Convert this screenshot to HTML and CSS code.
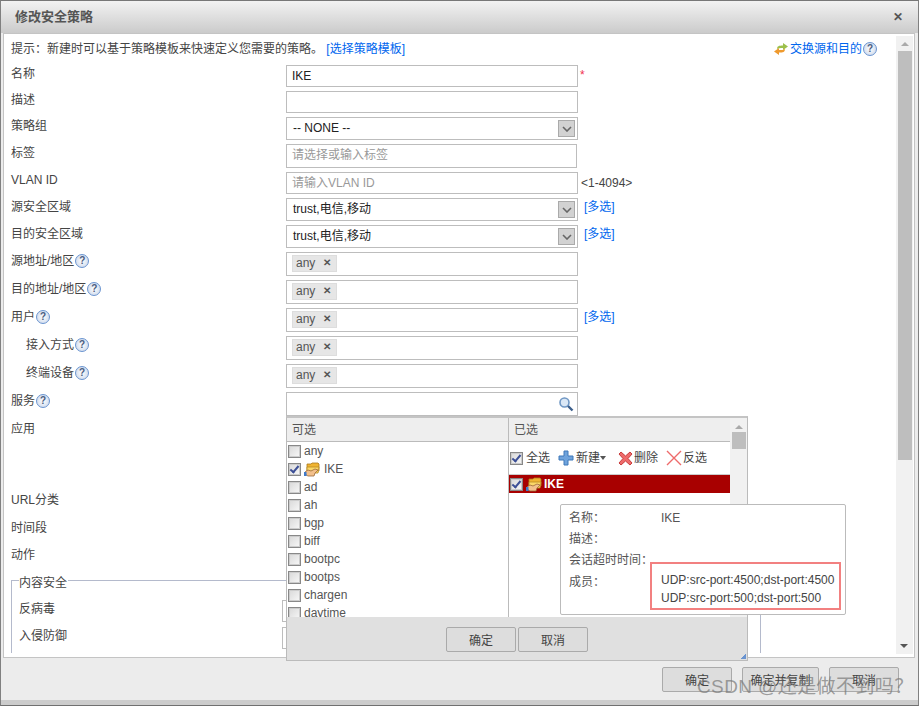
FILE: index.html
```html
<!DOCTYPE html>
<html>
<head>
    <title>修改安全策略</title>
    <link rel="stylesheet" href="styles.css">
</head>
<body>
    <svg class="defs" width="0" height="0">
        <symbol id="folder" viewBox="0 0 16 16">
            <path d="M3 3h4l1-1h6l1 1v7H3z" fill="#f0b432" stroke="#a9781c" stroke-width=".8"/>
            <path d="M3 6h12l-1 6H3z" fill="#fbd768" stroke="#b98a22" stroke-width=".8"/>
            <path d="M1 11l3-2 3 1 4-2 3 1-3 3-1 3H4l-2-1z" fill="#f3c08c" stroke="#9a6a3a" stroke-width=".8"/>
            <rect x="0" y="11" width="2.5" height="4" fill="#3f79c9"/>
        </symbol>
    </svg>

    <div class="dialog">
        <div class="title-bar">
            <span class="title">修改安全策略</span>
            <span class="close">&#10005;</span>
        </div>

        <div class="main">
            <div class="form">
                <div class="hint-row">
                    <span>提示：新建时可以基于策略模板来快速定义您需要的策略。 <a class="link">[选择策略模板]</a></span>
                    <span class="swap">
                        <svg width="14" height="12" viewBox="0 0 14 12">
                            <path d="M3 6C3 3 5 2.500 9 2.500V0l5 3.500L9 7V5C6 5 4.500 5 3 6z" fill="#9cc04c"/>
                            <path d="M11 6c0 3-2 3.500-6 3.500V12L0 8.500 5 5v2c3 0 4.500 0 6-1z" fill="#ef9a2e"/>
                        </svg>
                        <a class="link">交换源和目的</a><i class="help">?</i>
                    </span>
                </div>

                <div class="row">
                    <label>名称</label>
                    <div class="field h22">IKE</div>
                    <span class="req">*</span>
                </div>
                <div class="row">
                    <label>描述</label>
                    <div class="field h22"></div>
                </div>
                <div class="row">
                    <label>策略组</label>
                    <div class="field select h23">-- NONE --<b class="arrow"><svg width="10" height="6" viewBox="0 0 10 6"><path d="M1 1l4 4 4-4" fill="none" stroke="#666" stroke-width="1.6"/></svg></b></div>
                </div>
                <div class="row">
                    <label>标签</label>
                    <div class="field h24 short placeholder">请选择或输入标签</div>
                </div>
                <div class="row">
                    <label class="latin">VLAN ID</label>
                    <div class="field h22 placeholder">请输入VLAN ID</div>
                    <span class="note">&lt;1-4094&gt;</span>
                </div>
                <div class="row">
                    <label>源安全区域</label>
                    <div class="field select h23">trust,电信,移动<b class="arrow"><svg width="10" height="6" viewBox="0 0 10 6"><path d="M1 1l4 4 4-4" fill="none" stroke="#666" stroke-width="1.6"/></svg></b></div>
                    <a class="link more">[多选]</a>
                </div>
                <div class="row">
                    <label>目的安全区域</label>
                    <div class="field select h23">trust,电信,移动<b class="arrow"><svg width="10" height="6" viewBox="0 0 10 6"><path d="M1 1l4 4 4-4" fill="none" stroke="#666" stroke-width="1.6"/></svg></b></div>
                    <a class="link more">[多选]</a>
                </div>
                <div class="row">
                    <label>源地址/地区<i class="help">?</i></label>
                    <div class="field h24 tags"><span class="tag">any<b>&#10005;</b></span></div>
                </div>
                <div class="row">
                    <label>目的地址/地区<i class="help">?</i></label>
                    <div class="field h24 tags"><span class="tag">any<b>&#10005;</b></span></div>
                </div>
                <div class="row">
                    <label>用户<i class="help">?</i></label>
                    <div class="field h24 tags"><span class="tag">any<b>&#10005;</b></span></div>
                    <a class="link more">[多选]</a>
                </div>
                <div class="row">
                    <label class="sub">接入方式<i class="help">?</i></label>
                    <div class="field h24 tags"><span class="tag">any<b>&#10005;</b></span></div>
                </div>
                <div class="row">
                    <label class="sub">终端设备<i class="help">?</i></label>
                    <div class="field h24 tags"><span class="tag">any<b>&#10005;</b></span></div>
                </div>
                <div class="row">
                    <label>服务<i class="help">?</i></label>
                    <div class="field h24 search">
                        <svg width="16" height="16" viewBox="0 0 16 16">
                            <circle cx="6.5" cy="6.5" r="4.5" fill="#dbe8f6" stroke="#6f97c4" stroke-width="1.6"/>
                            <path d="M10 10l4.500 4.500" stroke="#3c5f8c" stroke-width="2.4"/>
                        </svg>
                    </div>
                </div>
                <div class="row app-row"><label>应用</label></div>
                <div class="row url-row"><label>URL分类</label></div>
                <div class="row time-row"><label>时间段</label></div>
                <div class="row action-row"><label>动作</label></div>

                <fieldset class="content-sec">
                    <legend>内容安全</legend>
                    <div class="row">
                        <label>反病毒</label>
                        <div class="field h22"></div>
                    </div>
                    <div class="row">
                        <label>入侵防御</label>
                        <div class="field h22"></div>
                    </div>
                </fieldset>
            </div>

            <div class="scrollbar">
                <span class="up"></span>
                <span class="thumb"></span>
                <span class="down"></span>
            </div>
        </div>

        <div class="footer">
            <button class="btn">确定</button>
            <button class="btn wide">确定并复制</button>
            <button class="btn">取消</button>
        </div>
    </div>

    <!-- service picker, opened over the form -->
    <div class="picker">
        <div class="picker-cols">
            <div class="col-left">
                <div class="col-head">可选</div>
                <ul class="svc-list">
                    <li><i class="check"></i>any</li>
                    <li><i class="check on"></i><svg class="folder"><use href="#folder"/></svg><span class="ike">IKE</span></li>
                    <li><i class="check"></i>ad</li>
                    <li><i class="check"></i>ah</li>
                    <li><i class="check"></i>bgp</li>
                    <li><i class="check"></i>biff</li>
                    <li><i class="check"></i>bootpc</li>
                    <li><i class="check"></i>bootps</li>
                    <li><i class="check"></i>chargen</li>
                    <li><i class="check"></i>daytime</li>
                </ul>
            </div>
            <div class="col-right">
                <div class="col-body">
                    <div class="col-head">已选</div>
                    <div class="tools">
                        <span class="tool"><i class="check on"></i>全选</span>
                        <span class="tool">
                            <svg width="16" height="16" viewBox="0 0 16 16"><path d="M6 1h4v5h5v4h-5v5H6v-5H1V6h5z" fill="#6fa3dc" stroke="#3f79b9"/></svg>新建<em class="caret"></em>
                        </span>
                        <span class="tool del">
                            <svg width="15" height="15" viewBox="0 0 15 15"><path d="M3 1l4.500 4L12 1l2 2-4 4.500 4 4.500-2 2-4.500-4L3 14l-2-2 4-4.500L1 3z" fill="#ee6a6a" stroke="#c83c3c"/></svg>删除
                        </span>
                        <span class="tool">
                            <svg width="16" height="16" viewBox="0 0 16 16"><path d="M1 1l14 14M15 1L1 15" stroke="#ee6a6a" stroke-width="1.4"/></svg>反选
                        </span>
                    </div>
                    <div class="selected"><i class="check on"></i><svg class="folder"><use href="#folder"/></svg>IKE</div>
                </div>
                <div class="mini-scroll">
                    <span class="up"></span>
                    <span class="thumb"></span>
                </div>
            </div>
        </div>
        <div class="picker-foot">
            <button class="btn">确定</button>
            <button class="btn">取消</button>
            <span class="grip"></span>
        </div>
    </div>

    <div class="tip">
        <div class="tip-row"><span>名称：</span><span>IKE</span></div>
        <div class="tip-row"><span>描述：</span><span></span></div>
        <div class="tip-row"><span>会话超时时间：</span><span></span></div>
        <div class="tip-row members">
            <span>成员：</span>
            <span class="member-box">UDP:src-port:4500;dst-port:4500<br>UDP:src-port:500;dst-port:500</span>
        </div>
    </div>

    <div class="watermark">CSDN @还是做不到吗？</div>
</body>
</html>
```

FILE: styles.css
```css
html, body {
    margin: 0;
    padding: 0;
    width: 919px;
    height: 707px;
    overflow: hidden;
    background-color: #fff;
}

body {
    position: relative;
    font-family: "Liberation Sans", "Noto Sans CJK SC", sans-serif;
    font-size: 12px;
    line-height: 16px;
    color: #444;
}

.defs {
    position: absolute;
}

i, em {
    font-style: normal;
}

.dialog {
    box-sizing: border-box;
    width: 919px;
    height: 706px;
    display: flex;
    flex-direction: column;
    background-color: #ececec;
    border: 1px solid #808080;
    border-bottom-color: #707070;
    border-top-color: #777;
    box-shadow: inset 0 -5px 0 #ccc;
}

.title-bar {
    height: 32px;
    flex: none;
    display: flex;
    align-items: center;
    justify-content: space-between;
    padding: 0 15px 0 14px;
    box-sizing: border-box;
    background: linear-gradient(#f2f2f2, #cbcbcb);
}

.title {
    font-size: 13px;
    font-weight: bold;
    color: #555;
}

.close {
    font-size: 12px;
    font-weight: bold;
    color: #555;
}

.main {
    flex: none;
    height: 625px;
    margin: 0 3px 0 2px;
    display: flex;
    background-color: #fff;
    border: 1px solid #c4c4c4;
    box-sizing: border-box;
    overflow: hidden;
}

.form {
    flex: 1;
    min-width: 0;
    padding: 7px 0 0 7px;
}

.hint-row {
    display: flex;
    justify-content: space-between;
    height: 24px;
    padding-right: 19px;
}

.link {
    color: #0066ee;
}

.swap {
    display: flex;
    align-items: flex-start;
}

.swap svg {
    margin: 2px 2px 0 0;
}

.help {
    display: inline-block;
    box-sizing: border-box;
    width: 14px;
    height: 14px;
    margin-left: 1px;
    border: 1.5px solid #6a94d0;
    border-radius: 50%;
    background: radial-gradient(#fff, #c4d2e8);
    color: #4b5d80;
    font-size: 10px;
    font-weight: bold;
    line-height: 11px;
    text-align: center;
    vertical-align: top;
    margin-top: 1px;
}

.row {
    display: flex;
    align-items: flex-start;
    margin-bottom: 4px;
}

.row label {
    width: 275px;
    flex: none;
    margin-top: 1px;
}

.row label.latin {
    margin-top: 0;
}

.row label.sub {
    padding-left: 15px;
    box-sizing: border-box;
}

.field {
    position: relative;
    box-sizing: border-box;
    width: 292px;
    flex: none;
    padding: 2px 5px;
    border: 1px solid #bdbdbd;
    background-color: #fff;
    color: #222;
}

.h22 { height: 22px; }
.h23 { height: 23px; }
.h24 { height: 24px; }

.short {
    width: 291px;
}

.placeholder {
    color: #999;
    padding-top: 2px;
}

.select {
    padding: 2px 6px;
}

.arrow {
    position: absolute;
    top: 2px;
    right: 2px;
    width: 17px;
    height: 17px;
    box-sizing: border-box;
    display: flex;
    align-items: center;
    justify-content: center;
    background-color: #d2d2d2;
    border: 1px solid #aaa;
}

.req {
    color: #f03050;
    margin-left: 2px;
    margin-top: 3px;
    line-height: 14px;
}

.note {
    margin-left: 3px;
    margin-top: 3px;
}

.more {
    margin-left: 6px;
    margin-top: 1px;
}

.tags {
    padding: 2px 5px;
}

.tag {
    display: inline-flex;
    align-items: center;
    box-sizing: border-box;
    height: 17px;
    padding: 0 5px 1px 3px;
    background-color: #e6e6e6;
    border: 1px solid #ddd;
    color: #555;
}

.tag b {
    margin-left: 8px;
    font-size: 10px;
    color: #555;
}

.search svg {
    position: absolute;
    top: 3px;
    right: 3px;
}

.app-row { height: 67px; }
.url-row { height: 24px; }
.time-row { height: 23px; }
.action-row { height: 23px; margin-bottom: 0; }

.content-sec {
    box-sizing: border-box;
    width: 750px;
    height: 84px;
    margin: 0;
    padding: 9px 0 0 7px;
    border: 1px solid #b4bacc;
    border-bottom: none;
}

.content-sec legend {
    padding: 6px 1px 0 0;
    margin-left: 0;
}

.content-sec .row {
    margin-bottom: 5px;
}

.content-sec label {
    width: 263px;
}

.scrollbar {
    flex: none;
    width: 17px;
    margin: 2px 1px 3px 0;
    display: flex;
    flex-direction: column;
    background-color: #f1f1f1;
    position: relative;
}

.up, .down {
    display: block;
    width: 0;
    height: 0;
    border-left: 4px solid transparent;
    border-right: 4px solid transparent;
}

.up {
    margin: 6px auto 5px;
    border-bottom: 4px solid #aaa;
}

.down {
    position: absolute;
    left: 4px;
    bottom: 6px;
    border-top: 4px solid #555;
}

.thumb {
    display: block;
    margin: 0 auto;
    width: 14px;
    height: 409px;
    background-color: #bebebe;
}

.footer {
    flex: none;
    display: flex;
    justify-content: flex-end;
    gap: 10px;
    padding: 9px 19px 0 0;
}

.btn {
    box-sizing: border-box;
    width: 70px;
    height: 25px;
    padding: 0;
    background-color: #ddd;
    border: 1px solid #aaa;
    border-radius: 2px;
    font-family: inherit;
    font-size: 12px;
    color: #444;
}

.btn.wide {
    width: 77px;
}

/* overlay: service picker */
.picker {
    position: absolute;
    left: 286px;
    top: 416px;
    box-sizing: border-box;
    width: 462px;
    height: 245px;
    display: flex;
    flex-direction: column;
    background-color: #fff;
    border: 1px solid #bbb;
    border-top-width: 2px;
    border-top-color: #c4c4c4;
}

.picker-cols {
    flex: 1;
    min-height: 0;
    display: flex;
}

.col-left {
    width: 221px;
    flex: none;
    border-right: 1px solid #bbb;
    overflow: hidden;
}

.col-right {
    flex: 1;
    display: flex;
    min-width: 0;
}

.col-body {
    flex: 1;
    min-width: 0;
}

.col-head {
    height: 24px;
    box-sizing: border-box;
    padding: 4px 5px;
    background-color: #eee;
    border-bottom: 1px solid #bbb;
    color: #555;
}

.svc-list {
    list-style: none;
    margin: 0;
    padding: 0 0 0 1px;
}

.svc-list li {
    display: flex;
    align-items: center;
    height: 18px;
    color: #555;
}

.check {
    display: block;
    position: relative;
    box-sizing: border-box;
    flex: none;
    width: 13px;
    height: 13px;
    margin-right: 3px;
    border: 1px solid #888;
    box-shadow: inset 0 0 0 1px #ccc;
    background: linear-gradient(135deg, #d8d8d8, #f8f8f8);
}

.check.on::after {
    content: "";
    position: absolute;
    left: 3px;
    top: 0;
    width: 3px;
    height: 7px;
    border: solid #3c4f96;
    border-width: 0 2px 2px 0;
    transform: rotate(40deg);
}

.folder {
    width: 16px;
    height: 16px;
    flex: none;
}

.ike {
    margin-left: 4px;
}

.tools {
    display: flex;
    align-items: center;
    height: 33px;
    padding-left: 1px;
    box-sizing: border-box;
    border-bottom: 1px solid #ccc;
    gap: 8px;
}

.tool {
    display: flex;
    align-items: center;
    color: #444;
}

.tool svg {
    margin-right: 1px;
}

.tool:nth-child(2) svg {
    margin-right: 2px;
}

.tool.del {
    margin-left: 4px;
}

.caret {
    width: 0;
    height: 0;
    border-left: 3px solid transparent;
    border-right: 3px solid transparent;
    border-top: 4px solid #555;
}

.selected {
    display: flex;
    align-items: center;
    height: 18px;
    padding-left: 1px;
    background-color: #a80000;
    color: #fff;
    font-weight: bold;
}

.selected .folder {
    margin-right: 2px;
}

.mini-scroll {
    flex: none;
    width: 17px;
    background-color: #f1f1f1;
}

.mini-scroll .up {
    margin: 7px auto 3px;
}

.mini-scroll .thumb {
    width: 14px;
    height: 17px;
}

.picker-foot {
    position: relative;
    flex: none;
    height: 43px;
    display: flex;
    justify-content: center;
    align-items: flex-start;
    gap: 2px;
    padding-top: 10px;
    box-sizing: border-box;
    background-color: #e0e0e0;
}

.grip {
    position: absolute;
    right: 1px;
    bottom: 1px;
    width: 5px;
    height: 5px;
    background: linear-gradient(135deg, transparent 50%, #6a94d0 50%);
}

/* overlay: hover card for the selected service */
.tip {
    position: absolute;
    left: 560px;
    top: 504px;
    box-sizing: border-box;
    width: 286px;
    height: 111px;
    padding: 5px 0 0 8px;
    background-color: #fff;
    border: 1px solid #bbb;
    border-radius: 2px;
    color: #555;
}

.tip-row {
    display: flex;
    height: 21px;
}

.tip-row span:first-child {
    width: 92px;
    flex: none;
}

.members {
    line-height: 18px;
}

.member-box {
    box-sizing: border-box;
    position: absolute;
    left: 89px;
    top: 57px;
    width: 191px;
    height: 48px;
    padding: 7px 0 0 9px;
    border: 2px solid #f28080;
    color: #444;
}

.watermark {
    position: absolute;
    left: 697px;
    top: 676px;
    font-size: 19px;
    line-height: 22px;
    letter-spacing: 0.4px;
    color: rgba(120, 120, 120, 0.7);
}
```
